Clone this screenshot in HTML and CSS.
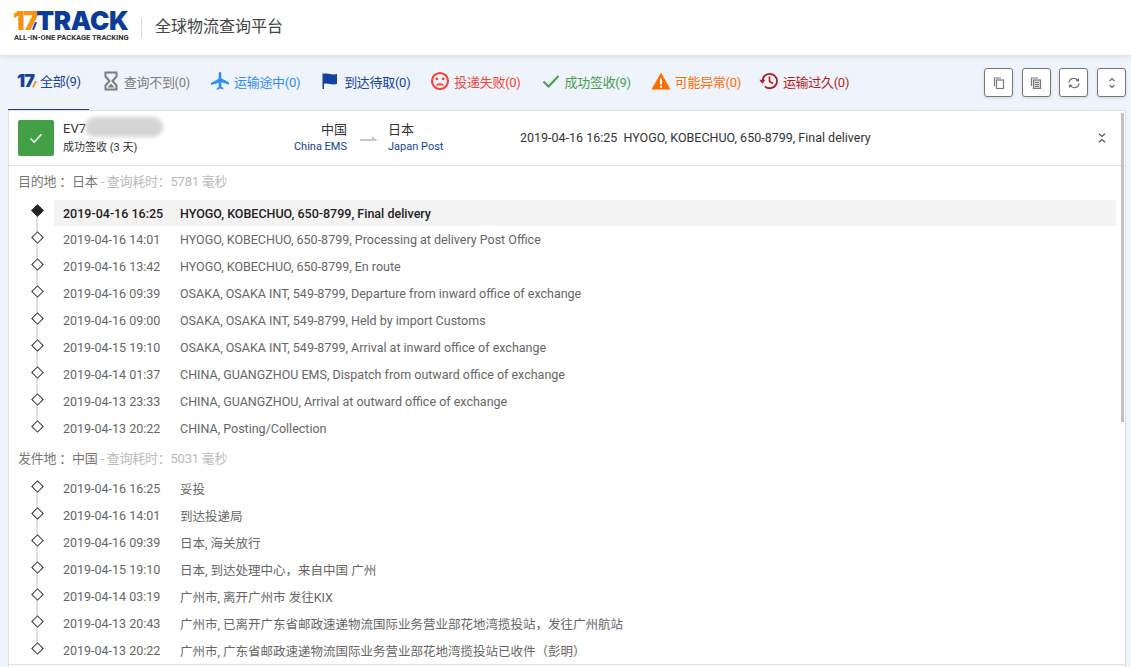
FILE: index.html
```html
<!DOCTYPE html>
<html lang="zh-CN">
<head>
<meta charset="utf-8">
<title>17TRACK</title>
<link rel="stylesheet" href="styles.css">
</head>
<body>
<header class="topbar">
  <div class="logo">
    <div class="logo-main"><span class="logo-17">17</span><svg class="logo-slash" viewBox="0 0 6 9"><path d="M3.500 0H6L2.500 9H0z" fill="#0c3c96"/></svg><span class="logo-track">TRACK</span></div>
    <div class="logo-sub">ALL-IN-ONE PACKAGE TRACKING</div>
  </div>
  <div class="topbar-title">全球物流查询平台</div>
</header>
<nav class="tabs">
  <a class="tab tab-all active"><span class="mini17">17<i></i></span><span>全部(9)</span></a>
  <a class="tab tab-none"><svg class="ic" viewBox="0 0 20 20"><path d="M4.500 1.500h11v4L11.500 10l4 4.500v4h-11v-4l4-4.500-4-4.500z" fill="none" stroke="#7d7d7d" stroke-width="2"/><path d="M6.500 16.500l3.500-4 3.500 4z" fill="#7d7d7d"/></svg><span>查询不到(0)</span></a>
  <a class="tab tab-transit"><svg class="ic" viewBox="0 0 20 20"><path d="M10 .8c.8 0 1.300 1 1.300 2.200v4.300l7.700 4.300v2l-7.700-2.300v4.300l2 1.500v1.300L10 17.600 6.700 18.900v-1.300l2-1.500v-4.300L1 14.100v-2l7.700-4.300V3c0-1.200.5-2.200 1.300-2.200z" fill="#2f8ff0"/></svg><span>运输途中(0)</span></a>
  <a class="tab tab-pickup"><svg class="ic" viewBox="0 0 20 20"><path d="M2.500 2.500h1.500v15.500H2.500z" fill="#13439c"/><path d="M4 3c4-1.500 7 1.500 13 0v10c-6 1.500-9-1.500-13 0z" fill="#13439c"/></svg><span>到达待取(0)</span></a>
  <a class="tab tab-fail"><svg class="ic" viewBox="0 0 20 20"><circle cx="10" cy="10" r="8" fill="none" stroke="#f44336" stroke-width="2.200"/><circle cx="6.800" cy="7.800" r="1.400" fill="#f44336"/><circle cx="13.200" cy="7.800" r="1.400" fill="#f44336"/><path d="M6 14.500c1-3 7-3 8 0z" fill="#f44336"/></svg><span>投递失败(0)</span></a>
  <a class="tab tab-done"><svg class="ic" viewBox="0 0 20 20"><path d="M2.500 10.500l5 5 10-10.500" fill="none" stroke="#479f4b" stroke-width="2"/></svg><span>成功签收(9)</span></a>
  <a class="tab tab-alert"><svg class="ic" viewBox="0 0 20 20"><path d="M10 1.500l9.500 17H.5z" fill="#ff6d00"/><path d="M9 7.500h2v6H9zM9 14.700h2v2H9z" fill="#fff"/></svg><span>可能异常(0)</span></a>
  <a class="tab tab-late"><svg class="ic" viewBox="0 0 20 20"><path d="M3.600 10a7.200 7.200 0 1 1 2.300 5.300" fill="none" stroke="#b71c1c" stroke-width="1.800"/><path d="M.3 8.800h6.200L3.400 12.800z" fill="#b71c1c"/><path d="M10.500 5.500v5l3.500 2" fill="none" stroke="#b71c1c" stroke-width="1.600"/></svg><span>运输过久(0)</span></a>
  <div class="tools">
    <button class="tool"><svg viewBox="0 0 12 12"><path d="M8 1H1.500v8" fill="none" stroke="#777" stroke-width="1.200"/><rect x="3.500" y="3" width="7" height="8.500" fill="none" stroke="#777" stroke-width="1.200"/></svg></button>
    <button class="tool"><svg viewBox="0 0 12 12"><path d="M8 1H1.500v8" fill="none" stroke="#777" stroke-width="1.200"/><rect x="3.500" y="3" width="7" height="8.500" fill="#ddd" stroke="#777" stroke-width="1.200"/><path d="M5 5.500h4M5 7.500h4M5 9.500h4" stroke="#777"/></svg></button>
    <button class="tool"><svg viewBox="0 0 12 12"><path d="M1 5.500A4.600 4.600 0 0 1 9.500 3.500M11 6.500A4.600 4.600 0 0 1 2.500 8.500" fill="none" stroke="#666" stroke-width="1.100"/><path d="M7.500 4.300h3.500V1zM4.500 7.700H1V11z" fill="#666"/></svg></button>
    <button class="tool"><svg viewBox="0 0 12 12"><path d="M3.500 4L6 1.500 8.500 4M3.500 8L6 10.500 8.500 8" fill="none" stroke="#666" stroke-width="1.200"/></svg></button>
  </div>
</nav>
<main class="card">
  <div class="scrollbar"></div>
  <section class="summary">
    <div class="status-box"><svg viewBox="0 0 16 16"><path d="M2.500 8.500l3.700 3.700 7.300-8" fill="none" stroke="#fff" stroke-width="1.600"/></svg></div>
    <div class="number">
      <div class="number-code">EV7<span class="blur"></span></div>
      <div class="number-status">成功签收 (3 天)</div>
    </div>
    <div class="route">
      <div class="route-from"><div class="country">中国</div><div class="carrier">China EMS</div></div>
      <svg class="route-arrow" viewBox="0 0 18 8"><path d="M0 4h12V1l6 5H0z" fill="#c8c8c8"/></svg>
      <div class="route-to"><div class="country">日本</div><div class="carrier">Japan Post</div></div>
    </div>
    <div class="latest">2019-04-16 16:25&nbsp; HYOGO, KOBECHUO, 650-8799, Final delivery</div>
    <svg class="collapse" viewBox="0 0 8 10"><path d="M1 .8l3 2.700L7 .8M1 9.200l3-2.700 3 2.700" fill="none" stroke="#555" stroke-width="1.200"/></svg>
  </section>
  <section class="details">
    <h3 class="group-title"><span class="gt-main">目的地 ：日本</span><span class="gt-time"> - 查询耗时：5781 毫秒</span></h3>
    <ul class="timeline">
      <li class="event current"><span class="time">2019-04-16 16:25</span><span class="desc">HYOGO, KOBECHUO, 650-8799, Final delivery</span></li>
      <li class="event"><span class="time">2019-04-16 14:01</span><span class="desc">HYOGO, KOBECHUO, 650-8799, Processing at delivery Post Office</span></li>
      <li class="event"><span class="time">2019-04-16 13:42</span><span class="desc">HYOGO, KOBECHUO, 650-8799, En route</span></li>
      <li class="event"><span class="time">2019-04-16 09:39</span><span class="desc">OSAKA, OSAKA INT, 549-8799, Departure from inward office of exchange</span></li>
      <li class="event"><span class="time">2019-04-16 09:00</span><span class="desc">OSAKA, OSAKA INT, 549-8799, Held by import Customs</span></li>
      <li class="event"><span class="time">2019-04-15 19:10</span><span class="desc">OSAKA, OSAKA INT, 549-8799, Arrival at inward office of exchange</span></li>
      <li class="event"><span class="time">2019-04-14 01:37</span><span class="desc">CHINA, GUANGZHOU EMS, Dispatch from outward office of exchange</span></li>
      <li class="event"><span class="time">2019-04-13 23:33</span><span class="desc">CHINA, GUANGZHOU, Arrival at outward office of exchange</span></li>
      <li class="event"><span class="time">2019-04-13 20:22</span><span class="desc">CHINA, Posting/Collection</span></li>
    </ul>
    <h3 class="group-title"><span class="gt-main">发件地 ：中国</span><span class="gt-time"> - 查询耗时：5031 毫秒</span></h3>
    <ul class="timeline timeline-origin">
      <li class="event"><span class="time">2019-04-16 16:25</span><span class="desc">妥投</span></li>
      <li class="event"><span class="time">2019-04-16 14:01</span><span class="desc">到达投递局</span></li>
      <li class="event"><span class="time">2019-04-16 09:39</span><span class="desc">日本, 海关放行</span></li>
      <li class="event"><span class="time">2019-04-15 19:10</span><span class="desc">日本, 到达处理中心，来自中国 广州</span></li>
      <li class="event"><span class="time">2019-04-14 03:19</span><span class="desc">广州市, 离开广州市 发往KIX</span></li>
      <li class="event"><span class="time">2019-04-13 20:43</span><span class="desc">广州市, 已离开广东省邮政速递物流国际业务营业部花地湾揽投站，发往广州航站</span></li>
      <li class="event"><span class="time">2019-04-13 20:22</span><span class="desc">广州市, 广东省邮政速递物流国际业务营业部花地湾揽投站已收件（彭明）</span></li>
    </ul>
  </section>
  <div class="next-card"></div>
</main>
</body>
</html>
```
FILE: styles.css
```css
* { box-sizing: border-box; }
html, body { margin: 0; height: 667px; overflow: hidden; }
body { background: #eff3fb; font-family: Roboto, "Noto Sans CJK SC", sans-serif; font-size: 13px; color: #333; }
.topbar { height: 55px; background: #fff; display: flex; align-items: center; padding-left: 14px; box-shadow: 0 1px 5px rgba(0,0,0,.12); position: relative; }
.logo { width: 115px; margin-top: -3px; }
.logo-main { display: flex; align-items: center; height: 21px; line-height: 21px; font-family: Inter, Roboto, sans-serif; font-weight: 900; font-size: 26px; }
.logo-17 { color: #f8930f; letter-spacing: -1.500px; margin-left: -1px; }
.logo-slash { width: 5px; height: 8px; margin: 11px 0 0 -5px; flex: none; }
.logo-track { color: #0c3c96; letter-spacing: -.3px; margin-left: -1px; }
.logo-sub { font-size: 7.500px; font-weight: 700; font-family: Roboto, sans-serif; color: #333; margin-top: 3px; white-space: nowrap; line-height: 8px; }
.topbar-title { margin-left: 12px; padding-left: 13px; border-left: 1px solid #ddd; font-size: 16px; line-height: 17px; color: #444; height: 20px; }
.tabs { height: 55px; display: flex; align-items: center; padding-left: 8px; position: relative; gap: 4px; }
.tab { height: 55px; display: flex; align-items: center; padding: 0 8px 3px; gap: 4px; white-space: nowrap; font-size: 13px; letter-spacing: -.3px; }
.tab-all { color: #13439c; border-bottom: 1px solid #13439c; padding-left: 9px; }
.tab-none { color: #7d7d7d; gap: 3px; }
.tab-transit { color: #2f8ff0; }
.tab-pickup { color: #13439c; }
.tab-fail { color: #f44336; }
.tab-done { color: #479f4b; }
.tab-alert { color: #ff6d00; }
.tab-late { color: #b71c1c; margin-left: -2px; }
.ic { width: 20px; height: 20px; flex: none; }
.mini17 { font-family: Inter, Roboto, sans-serif; font-weight: 900; font-size: 18px; letter-spacing: -1px; color: #13439c; width: 19px; display: block; position: relative; line-height: 20px; }
.mini17 i { position: absolute; right: -1px; bottom: 3px; width: 5px; height: 7px; background: #f8930f; clip-path: polygon(60% 0, 100% 0, 40% 100%, 0 100%); }
.tools { margin-left: auto; display: flex; gap: 8.670px; padding-right: 5px; }
.tool { width: 29px; height: 29px; padding: 0; background: #fff; border: 1px solid #777; border-radius: 3px; display: flex; align-items: center; justify-content: center; box-shadow: 0 1px 3px rgba(0,0,0,.12); }
.tool svg { width: 12px; height: 12px; }
.card { margin-left: 8px; width: 1118px; height: 557px; background: #fff; border: 1px solid #e0e0e0; border-bottom: 0; position: relative; overflow: hidden; }
.scrollbar { position: absolute; right: 1px; top: 2px; width: 3px; height: 309px; background: #c1c1c1; }
.summary { height: 55px; display: flex; align-items: center; padding-left: 9px; border-bottom: 1px solid #e0e0e0; }
.status-box { width: 36px; height: 36px; background: #43a047; border-radius: 2px; display: flex; align-items: center; justify-content: center; flex: none; }
.status-box svg { width: 16px; height: 16px; }
.number { width: 150px; margin-left: 9px; }
.number-code { line-height: 18px; position: relative; }
.blur { position: absolute; left: 22px; top: -3px; width: 78px; height: 20px; border-radius: 10px; background: #d4d4d4; filter: blur(2px); }
.number-status { font-size: 11px; line-height: 18px; margin-top: 1px; }
.route { display: flex; align-items: center; margin-left: 59px; width: 248px; }
.route-from { width: 75px; text-align: right; }
.route-to { width: 80px; }
.country { font-size: 13px; line-height: 18px; }
.carrier { font-size: 11px; line-height: 16px; color: #13439c; white-space: nowrap; }
.route-arrow { width: 18px; height: 8px; margin: 2px 10px 0 13px; flex: none; }
.latest { font-size: 12.500px; flex: 1; white-space: nowrap; padding-bottom: 1px; }
.collapse { width: 8px; height: 10px; margin-right: 19px; flex: none; }
.details { padding-top: 4px; height: 498px; overflow: hidden; }
.next-card { border-top: 1px solid #e0e0e0; height: 2px; }
.group-title { margin: 0; height: 26px; padding-left: 9px; font-size: 13px; font-weight: 400; line-height: 24px; letter-spacing: -.25px; }
.gt-main { color: #777; }
.gt-time { color: #bbb; }
.timeline { list-style: none; margin: 0 0 5px; padding: 4px 9px 0 45px; }
.timeline-origin { padding-top: 2px; }
.event { position: relative; height: 27px; display: flex; align-items: center; padding-left: 9px; color: #666; font-size: 12.500px; white-space: nowrap; }
.event::before { content: ""; position: absolute; left: -21px; top: 7px; width: 7px; height: 7px; background: #fff; border: 1px solid #333; transform: rotate(45deg); z-index: 1; }
.event::after { content: ""; position: absolute; left: -18px; top: 15px; width: 2px; height: 19px; background: #e0e0e0; }
.event:last-child::after { display: none; }
.time { width: 117px; flex: none; }
.current { height: 26px; background: #f3f3f3; color: #222; font-weight: 500; }
.current::before { top: 6px; background: #222; }
```
